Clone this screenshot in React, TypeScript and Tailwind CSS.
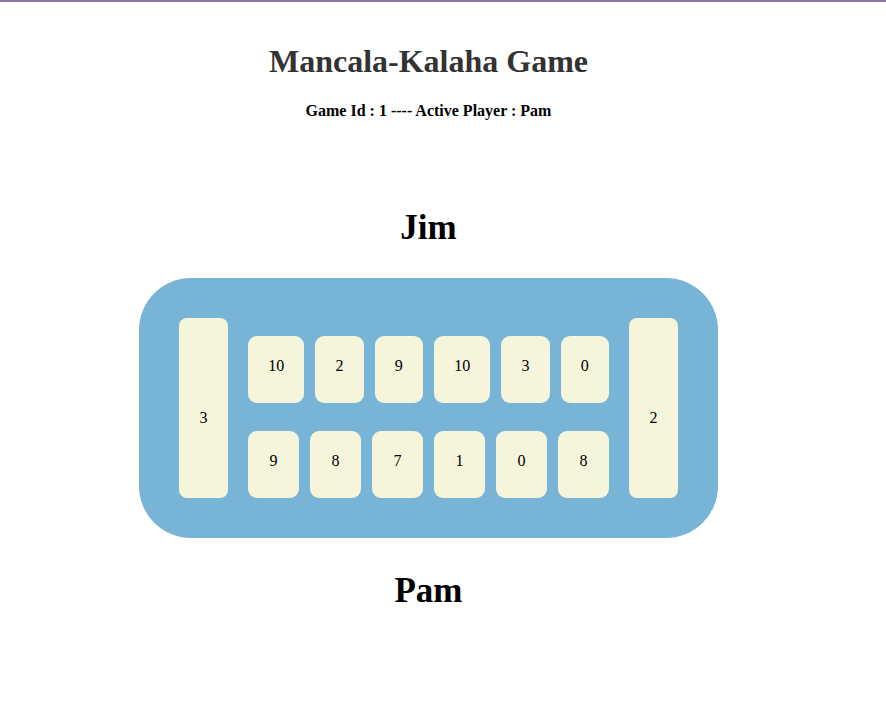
const topRow = [10, 2, 9, 10, 3, 0];
const bottomRow = [9, 8, 7, 1, 0, 8];

function Pit({ count }: { count: number }) {
  return (
    <div className="grow h-[67px] px-5 pb-[8px] rounded-[9px] bg-[#f5f5dc] flex items-center justify-center">
      {count}
    </div>
  );
}

function Store({ count }: { count: number }) {
  return (
    <div className="w-[49px] h-[180px] pt-5 rounded-[8px] bg-[#f5f5dc] flex items-center justify-center">
      {count}
    </div>
  );
}

export default function App() {
  return (
    <div
      className="min-h-[708px] bg-white text-black border-t-2 border-[#8c70a6]"
      style={{ fontFamily: '"Liberation Serif", "Times New Roman", serif' }}
    >
      <div className="w-[857px] flex flex-col items-center">
        <h1 className="mt-[43px] text-[32px] leading-none font-bold text-[#333333]">
          Mancala-Kalaha Game
        </h1>
        <h4 className="mt-[26px] text-[16px] leading-none font-bold">
          Game Id : 1 ---- Active Player : Pam
        </h4>

        <h1 className="mt-[91px] text-[35px] leading-none font-bold">Jim</h1>

        <div className="mt-[33px] w-[579px] h-[260px] rounded-[52px] bg-[#78b4d6] p-10 flex text-[16px]">
          <Store count={3} />
          <div className="w-[361px] mx-5 mt-[18px] flex flex-col gap-[28px]">
            <div className="flex gap-[11px]">
              {topRow.map((n, i) => (
                <Pit key={i} count={n} />
              ))}
            </div>
            <div className="flex gap-[11px]">
              {bottomRow.map((n, i) => (
                <Pit key={i} count={n} />
              ))}
            </div>
          </div>
          <Store count={2} />
        </div>

        <h1 className="mt-[35px] text-[35px] leading-none font-bold">Pam</h1>
      </div>
    </div>
  );
}
